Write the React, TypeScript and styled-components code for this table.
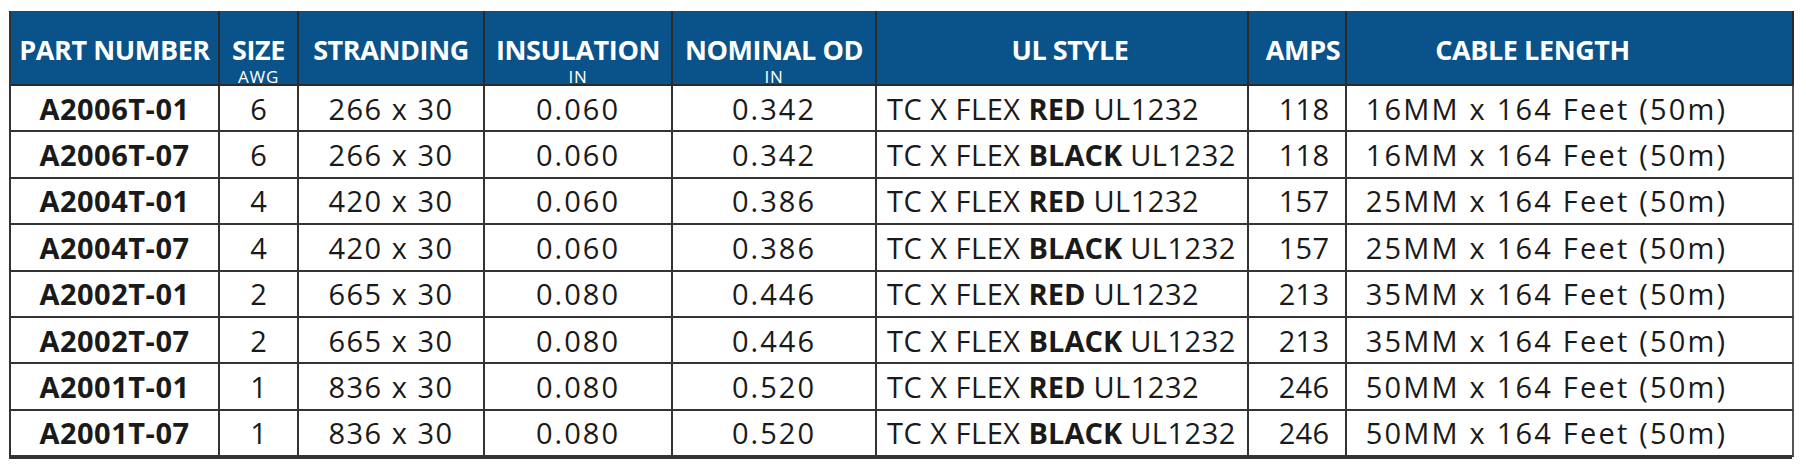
import { FC } from 'react'
import styled, { createGlobalStyle } from 'styled-components'

type Row = {
    part: string
    size: string
    stranding: string
    insulation: string
    od: string
    color: string
    amps: string
    length: string
}

const rows: Row[] = [
    { part: 'A2006T-01', size: '6', stranding: '266 x 30', insulation: '0.060', od: '0.342', color: 'RED', amps: '118', length: '16MM x 164 Feet (50m)' },
    { part: 'A2006T-07', size: '6', stranding: '266 x 30', insulation: '0.060', od: '0.342', color: 'BLACK', amps: '118', length: '16MM x 164 Feet (50m)' },
    { part: 'A2004T-01', size: '4', stranding: '420 x 30', insulation: '0.060', od: '0.386', color: 'RED', amps: '157', length: '25MM x 164 Feet (50m)' },
    { part: 'A2004T-07', size: '4', stranding: '420 x 30', insulation: '0.060', od: '0.386', color: 'BLACK', amps: '157', length: '25MM x 164 Feet (50m)' },
    { part: 'A2002T-01', size: '2', stranding: '665 x 30', insulation: '0.080', od: '0.446', color: 'RED', amps: '213', length: '35MM x 164 Feet (50m)' },
    { part: 'A2002T-07', size: '2', stranding: '665 x 30', insulation: '0.080', od: '0.446', color: 'BLACK', amps: '213', length: '35MM x 164 Feet (50m)' },
    { part: 'A2001T-01', size: '1', stranding: '836 x 30', insulation: '0.080', od: '0.520', color: 'RED', amps: '246', length: '50MM x 164 Feet (50m)' },
    { part: 'A2001T-07', size: '1', stranding: '836 x 30', insulation: '0.080', od: '0.520', color: 'BLACK', amps: '246', length: '50MM x 164 Feet (50m)' },
]

const headers: { title: string, unit?: string, shift?: number }[] = [
    { title: 'PART NUMBER' },
    { title: 'SIZE', unit: 'AWG' },
    { title: 'STRANDING' },
    { title: 'INSULATION', unit: 'IN' },
    { title: 'NOMINAL OD', unit: 'IN' },
    { title: 'UL STYLE', shift: 16 },
    { title: 'AMPS', shift: 12 },
    { title: 'CABLE LENGTH', shift: -74 },
]

const App: FC = () => {
    return (<>
        <GlobalStyle />
        <Table>
            {
                headers.map(h =>
                    <HeadCell key={ h.title } $shift={ h.shift ?? 0 }>
                        <HeadTitle>{ h.title }</HeadTitle>
                        { h.unit && <HeadUnit>{ h.unit }</HeadUnit> }
                    </HeadCell>
                )
            }
            {
                rows.map(r => [
                    <Cell key={ r.part + 'p' } $spacing={ 0.5 }><Part>{ r.part }</Part></Cell>,
                    <Cell key={ r.part + 's' }>{ r.size }</Cell>,
                    <Cell key={ r.part + 'st' } $spacing={ 1.5 }>{ r.stranding }</Cell>,
                    <Cell key={ r.part + 'i' } $spacing={ 2 }>{ r.insulation }</Cell>,
                    <Cell key={ r.part + 'o' } $spacing={ 2 }>{ r.od }</Cell>,
                    <Cell key={ r.part + 'u' } $align="left" $spacing={ 0.5 }>TC X FLEX&nbsp;<Strong>{ r.color }</Strong>&nbsp;UL1232</Cell>,
                    <Cell key={ r.part + 'a' } $shift={ 14 } $spacing={ 0.2 }>{ r.amps }</Cell>,
                    <Cell key={ r.part + 'l' } $shift={ -46 } $spacing={ 2.2 }>{ r.length }</Cell>,
                ])
            }
        </Table>
    </>)
}

const GlobalStyle = createGlobalStyle`
  body {
    margin: 0;
    padding: 11px 0 0 9px;
    background: #fff;
    font-family: "Open Sans", "Noto Sans", sans-serif;
  }
`

const Table = styled.div`
  display: grid;
  width: 1783px;
  grid-template-columns: 209px 79px 186px 188px 204px 372px 98px 447px;
  grid-template-rows: 75px repeat(8, 46.375px);
  box-sizing: border-box;
  border-left: 2px solid #333;
  border-bottom: 2px solid #333;
`

const HeadCell = styled.div<{ $shift: number }>`
  background: #0a528a;
  color: #fff;
  display: flex;
  flex-direction: column;
  align-items: center;
  justify-content: flex-start;
  padding-top: 24px;
  padding-left: ${p => Math.max(p.$shift, 0)}px;
  padding-right: ${p => Math.max(-p.$shift, 0)}px;
  box-sizing: border-box;
  border-right: 2px solid #2a2a2a;
  border-bottom: 2px solid #2a2a2a;
  &:last-of-type { border-right-color: #8a8a8a; }
`

const HeadTitle = styled.div`
  font-weight: 700;
  font-size: 27px;
  line-height: 30px;
  letter-spacing: -0.4px;
  white-space: nowrap;
`

const HeadUnit = styled.div`
  font-size: 17px;
  line-height: 17px;
  letter-spacing: 0.8px;
  margin-top: 3px;
`

const Cell = styled.div<{ $align?: 'left' | 'center', $shift?: number, $spacing?: number }>`
  display: flex;
  align-items: center;
  justify-content: ${p => p.$align === 'left' ? 'flex-start' : 'center'};
  padding-left: ${p => p.$align === 'left' ? 10 : Math.max(p.$shift ?? 0, 0)}px;
  padding-right: ${p => Math.max(-(p.$shift ?? 0), 0)}px;
  box-sizing: border-box;
  border-right: 2px solid #333;
  border-bottom: 2px solid #333;
  font-size: 29px;
  letter-spacing: ${p => p.$spacing ?? 0}px;
  color: #1a1a1a;
  white-space: nowrap;
  &:nth-child(8n) { border-right-color: #555; }
`

const Part = styled.span`
  font-weight: 700;
`

const Strong = styled.b`
  font-weight: 700;
  letter-spacing: 0;
`

export default App
